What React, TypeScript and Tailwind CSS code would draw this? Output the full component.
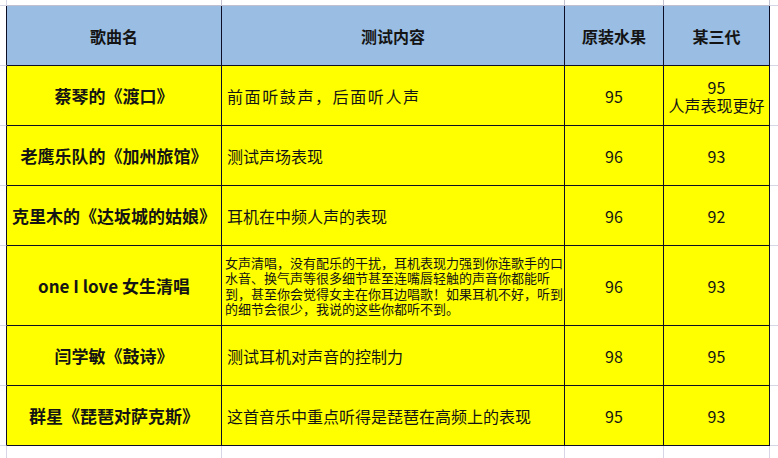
import React from "react";

type Row = {
  name: string;
  test: string[];
  a: string;
  b: string[];
  h: string;
  small?: boolean;
  spaced?: boolean;
};

const rows: Row[] = [
  { name: "蔡琴的《渡口》", test: ["前面听鼓声，后面听人声"], a: "95", b: ["95", "人声表现更好"], h: "h-[60px]", spaced: true },
  { name: "老鹰乐队的《加州旅馆》", test: ["测试声场表现"], a: "96", b: ["93"], h: "h-[60px]" },
  { name: "克里木的《达坂城的姑娘》", test: ["耳机在中频人声的表现"], a: "96", b: ["92"], h: "h-[60px]" },
  {
    name: "one I love 女生清唱",
    test: [
      "女声清唱，没有配乐的干扰，耳机表现力强到你连歌手的口",
      "水音、换气声等很多细节甚至连嘴唇轻触的声音你都能听",
      "到，甚至你会觉得女主在你耳边唱歌！如果耳机不好，听到",
      "的细节会很少，我说的这些你都听不到。",
    ],
    a: "96",
    b: ["93"],
    h: "h-[80px]",
    small: true,
  },
  { name: "闫学敏《鼓诗》", test: ["测试耳机对声音的控制力"], a: "98", b: ["95"], h: "h-[60px]" },
  { name: "群星《琵琶对萨克斯》", test: ["这首音乐中重点听得是琵琶在高频上的表现"], a: "95", b: ["93"], h: "h-[60px]" },
];

const dark = "border-[#0d0d26]";
const light = "border-[#d6d6e6]";
const cell = `border-r border-b ${dark} flex items-center`;

function MarginRow({ top, h }: { top: boolean; h: string }) {
  const b = top ? `border-b ${dark}` : "";
  return (
    <>
      <div className={`${h} border-r ${light} ${top ? `border-b ${light}` : ""}`} />
      <div className={`${h} border-r ${top ? "border-[#c0c0d0]" : light} ${b}`} />
      <div className={`${h} border-r ${top ? "border-[#c0c0d0]" : light} ${b}`} />
      <div className={`${h} border-r ${top ? "border-[#c0c0d0]" : light} ${b}`} />
      <div className={`${h} border-r ${top ? "border-[#c0c0d0]" : light} ${b}`} />
      <div className={`${h} ${top ? `border-b ${light}` : ""}`} />
    </>
  );
}

export default function App() {
  return (
    <div
      className="w-[778px] h-[458px] bg-white text-[#141414] grid grid-cols-[7px_215px_343px_99px_106px_1fr] grid-rows-[6px_60px_60px_60px_60px_80px_60px_60px_1fr] overflow-hidden"
      style={{ fontFamily: '"Noto Sans CJK SC", "Noto Sans", sans-serif' }}
    >
      <MarginRow top h="h-[6px]" />

      {/* header */}
      <div className={`border-r border-b ${dark}`} style={{ borderBottomColor: "#d6d6e6" }} />
      <div className={`${cell} bg-[#99bde3] justify-center font-bold text-[16px]`}>歌曲名</div>
      <div className={`${cell} bg-[#99bde3] justify-center font-bold text-[16px]`}>测试内容</div>
      <div className={`${cell} bg-[#99bde3] justify-center font-bold text-[16px]`}>原装水果</div>
      <div className={`${cell} bg-[#99bde3] justify-center font-bold text-[16px]`}>某三代</div>
      <div className={`border-b ${light}`} />

      {rows.map((r, i) => (
        <React.Fragment key={i}>
          <div className={`border-r ${dark} border-b`} style={{ borderBottomColor: "#d6d6e6" }} />
          <div className={`${cell} bg-[#ffff00] justify-center font-bold text-[17px] whitespace-nowrap`}>{r.name}</div>
          <div
            className={`${cell} bg-[#ffff00] ${
              r.small ? "pl-[3px] text-[13px] leading-[15.3px]" : "pl-[5px] text-[16px]"
            } ${r.spaced ? "tracking-[1.6px]" : ""}`}
          >
            <div className="flex flex-col">
              {r.test.map((t, j) => (
                <span key={j} className="whitespace-nowrap">
                  {t}
                </span>
              ))}
            </div>
          </div>
          <div className={`${cell} bg-[#ffff00] justify-center text-[16px]`}>{r.a}</div>
          <div className={`${cell} bg-[#ffff00] justify-center flex-col text-[16px] leading-[18px]`}>
            {r.b.map((t, j) => (
              <span key={j}>{t}</span>
            ))}
          </div>
          <div className={`border-b ${light}`} />
        </React.Fragment>
      ))}

      <MarginRow top={false} h="h-full" />
    </div>
  );
}
